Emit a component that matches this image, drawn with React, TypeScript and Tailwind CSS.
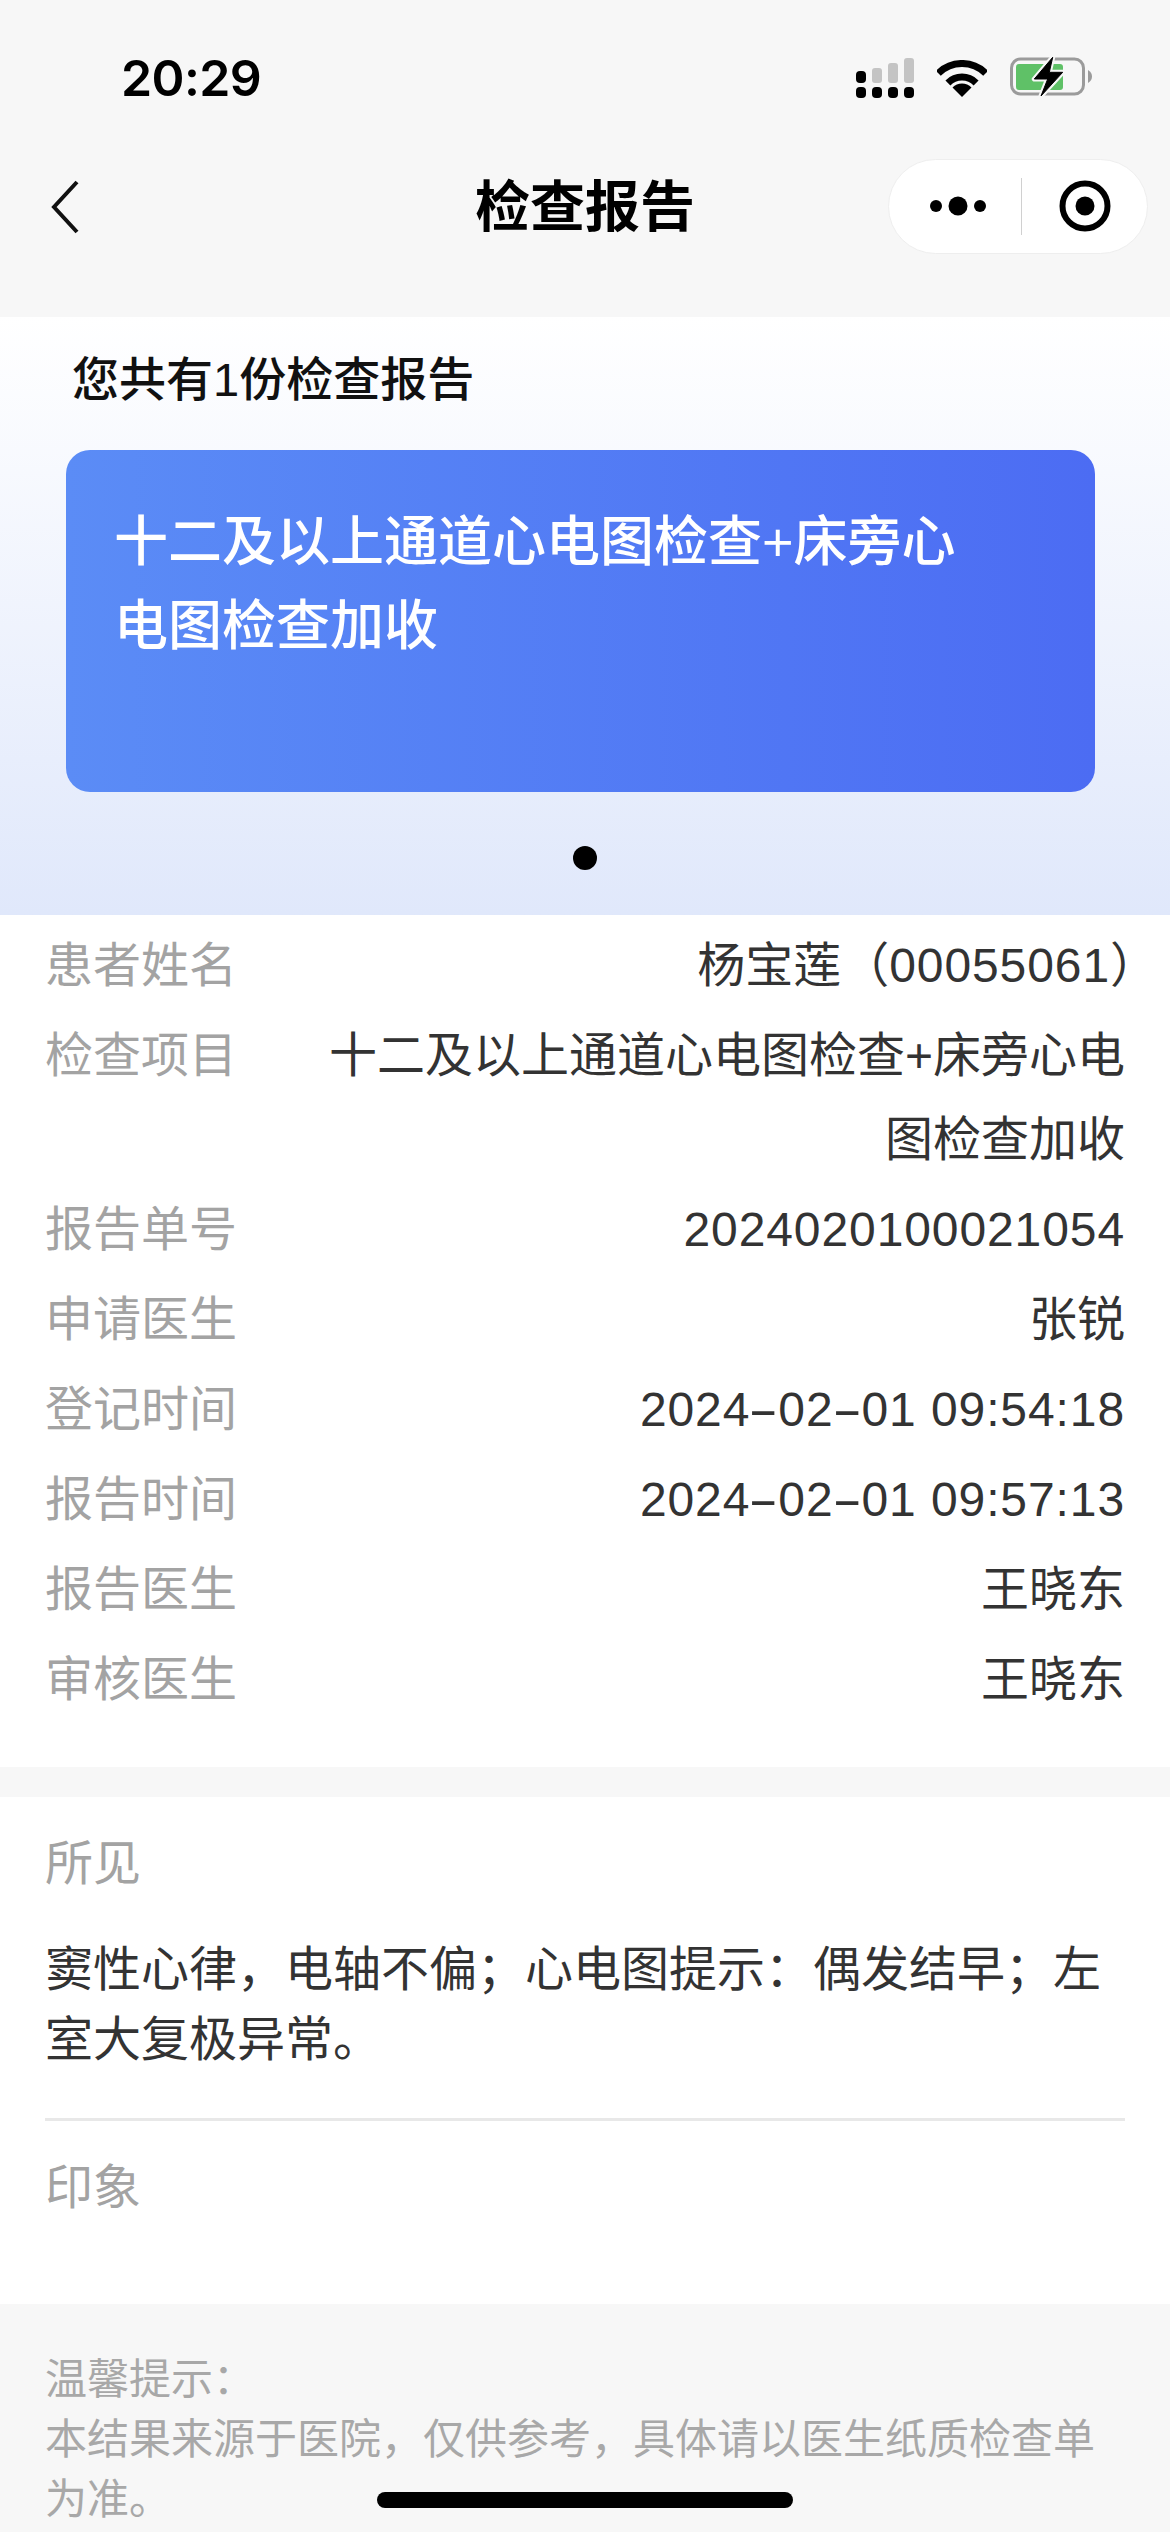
import type { ReactNode } from "react";

// hyphen in the reference is close to an en dash wide, so stretch it
const dateText = (text: string) =>
  text.split("-").map((part, i) => (
    <span key={part + i}>
      {i > 0 && <span className="inline-block w-[28px] text-center scale-x-[1.9]">-</span>}
      {part}
    </span>
  ));

const rows: { label: string; value: ReactNode; tracked?: boolean }[] = [
  {
    label: "患者姓名",
    value: (
      <>
        杨宝莲（<span className="tracking-[0.9px]">00055061</span>
        <span className="-mr-[33px]">）</span>
      </>
    ),
  },
  { label: "检查项目", value: "十二及以上通道心电图检查+床旁心电图检查加收" },
  { label: "报告单号", value: "2024020100021054", tracked: true },
  { label: "申请医生", value: "张锐" },
  { label: "登记时间", value: dateText("2024-02-01 09:54:18"), tracked: true },
  { label: "报告时间", value: dateText("2024-02-01 09:57:13"), tracked: true },
  { label: "报告医生", value: "王晓东" },
  { label: "审核医生", value: "王晓东" },
];

const SignalIcon = () => (
  <svg width="58" height="40" viewBox="0 0 58 40">
    <rect x="0" y="13" width="10" height="12" rx="4" fill="#000" />
    <rect x="16" y="10" width="10" height="15" rx="3" fill="#c4c4c4" />
    <rect x="32" y="5" width="10" height="20" rx="3" fill="#c4c4c4" />
    <rect x="48" y="0" width="10" height="25" rx="3" fill="#c4c4c4" />
    <rect x="0" y="29" width="10" height="11" rx="4" fill="#000" />
    <rect x="16" y="29" width="10" height="11" rx="4" fill="#000" />
    <rect x="32" y="29" width="10" height="11" rx="4" fill="#000" />
    <rect x="48" y="29" width="10" height="11" rx="4" fill="#000" />
  </svg>
);

const WifiIcon = () => (
  <svg width="50" height="37" viewBox="0 0 50 37" fill="none">
    <path d="M1.3 13.3A33.5 33.5 0 0 1 48.7 13.3" stroke="#000" strokeWidth="7" />
    <path d="M10.9 22.9A20 20 0 0 1 39.1 22.9" stroke="#000" strokeWidth="7" />
    <path d="M25 37L15.5 27.5A13.4 13.4 0 0 1 34.5 27.5Z" fill="#000" />
  </svg>
);

const BatteryIcon = () => (
  <svg width="83" height="42" viewBox="0 0 83 42" fill="none">
    <rect x="1.5" y="2" width="72" height="35" rx="9" stroke="#9b9b9b" strokeWidth="3" />
    <rect x="6" y="7" width="47" height="26" rx="3" fill="#5fc167" />
    <path d="M78 13C81 15 82 17 82 19.500C82 22 81 24 78 26Z" fill="#9b9b9b" />
    <path d="M42.700 0.300L24.300 22L37.700 22L31 39L52.700 15.300L39.300 15.300Z" fill="#000" stroke="#f7f7f7" strokeWidth="5" strokeLinejoin="round" />
    <path d="M42.700 0.300L24.300 22L37.700 22L31 39L52.700 15.300L39.300 15.300Z" fill="#000" stroke="#000" strokeWidth="1" strokeLinejoin="round" />
  </svg>
);

const Capsule = () => (
  <div className="w-[260px] h-[95px] -mt-[2px] rounded-full bg-white border border-[#eeeeee] flex items-center">
    <div className="flex-1 flex items-center justify-center pl-[8px]">
      <svg width="58" height="20" viewBox="0 0 58 20">
        <circle cx="6" cy="10" r="6" fill="#000" />
        <circle cx="28" cy="10" r="9.500" fill="#000" />
        <circle cx="50" cy="10" r="6" fill="#000" />
      </svg>
    </div>
    <div className="w-px h-[57px] bg-[#d0d0d0]" />
    <div className="flex-1 flex items-center justify-center pl-[2px]">
      <svg width="52" height="52" viewBox="0 0 52 52" fill="none">
        <circle cx="26" cy="26" r="22.500" stroke="#000" strokeWidth="6" />
        <circle cx="26" cy="26" r="9.500" fill="#000" />
      </svg>
    </div>
  </div>
);

export default function App() {
  return (
    <div className="relative w-[1170px] h-[2532px] overflow-hidden bg-[#f7f7f7] text-[48px] leading-[84px] font-['Liberation_Sans','Noto_Sans_CJK_SC',sans-serif]">
      {/* status bar */}
      <div className="h-[156px] flex items-center justify-between pl-[121px] pr-[77px]">
        <span className="font-['Inter'] text-[50px] leading-none font-semibold text-black tracking-[-0.6px]">20:29</span>
        <div className="flex items-center gap-[23px]">
          <SignalIcon />
          <WifiIcon />
          <BatteryIcon />
        </div>
      </div>

      {/* nav bar */}
      <div className="h-[102px] mb-[59px] grid grid-cols-[1fr_auto_1fr] items-center">
        <div className="pl-[50px]">
          <svg width="30" height="54" viewBox="0 0 30 54" fill="none">
            <path d="M27 2L4 27L27 52" stroke="#111" strokeWidth="4" />
          </svg>
        </div>
        <div className="text-[55px] leading-[84px] font-bold text-black">检查报告</div>
        <div className="flex justify-end pr-[22px]">
          <Capsule />
        </div>
      </div>

      {/* report carousel */}
      <div className="h-[598px] pt-[33px] bg-gradient-to-b from-white to-[#e0e8fb] flex flex-col">
        <div className="pl-[72px] text-[47px] leading-[60px] font-medium text-[#111111]">您共有1份检查报告</div>
        <div className="mt-[40px] ml-[66px] mr-[75px] h-[342px] rounded-[24px] bg-gradient-to-r from-[#5b8cf6] to-[#4c6cf3] pt-[50px] pl-[48px] pr-[91px] text-[54px] leading-[84px] font-medium text-white">
          十二及以上通道心电图检查+床旁心电图检查加收
        </div>
        <div className="mt-[54px] self-center w-[24px] h-[24px] rounded-full bg-black" />
      </div>

      {/* patient info */}
      <div className="bg-white pt-[9px] pb-[45px] px-[45px] flex flex-col gap-[6px]">
        {rows.map((row) => (
          <div key={row.label} className="flex justify-between">
            <span className="text-[#a3a3a3] shrink-0">{row.label}</span>
            <span className={`w-[802px] text-right text-[#333333] ${row.tracked ? "tracking-[0.9px]" : ""}`}>{row.value}</span>
          </div>
        ))}
      </div>

      {/* findings */}
      <div className="mt-[30px] bg-white pt-[25px] pb-[74px] px-[45px]">
        <div className="text-[#a3a3a3]">所见</div>
        <div className="mt-[29px] leading-[70px] text-[#333333]">窦性心律，电轴不偏；心电图提示：偶发结早；左室大复极异常。</div>
        <div className="mt-[43px] h-[3px] bg-[#e8e8e8]" />
        <div className="mt-[25px] text-[#a3a3a3]">印象</div>
      </div>

      {/* tips */}
      <div className="pt-[46px] px-[45px] text-[42px] leading-[60px] text-[#a8a8a8]">
        <div>温馨提示：</div>
        <div>本结果来源于医院，仅供参考，具体请以医生纸质检查单为准。</div>
      </div>

      <div className="absolute left-[377px] top-[2492px] w-[416px] h-[16px] rounded-full bg-black" />
    </div>
  );
}
